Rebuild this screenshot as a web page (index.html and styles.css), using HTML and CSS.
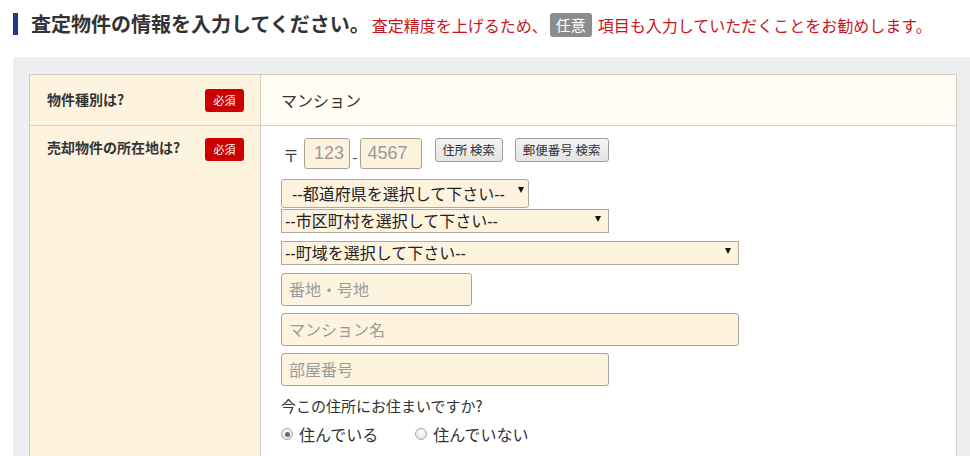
FILE: index.html
```html
<!DOCTYPE html>
<html lang="ja">
<head>
<meta charset="utf-8">
<title>査定物件の情報</title>
<link rel="stylesheet" href="styles.css">
</head>
<body>
<header class="head">
  <span class="head-bar"></span>
  <h1 class="head-title">査定物件の情報を入力してください。</h1>
  <p class="head-note">査定精度を上げるため、<span class="tag-optional">任意</span>項目も入力していただくことをお勧めします。</p>
</header>

<section class="panel">
  <div class="form-table">
    <div class="cell-label row-first">
      <span class="label-text">物件種別は?</span>
      <span class="tag-required">必須</span>
    </div>
    <div class="cell-value value-first">マンション</div>

    <div class="cell-label row-second">
      <span class="label-text">売却物件の所在地は?</span>
      <span class="tag-required">必須</span>
    </div>
    <div class="cell-value value-second">
      <div class="zip-row">
        <span class="zip-mark">〒</span>
        <input class="input zip1" type="text" placeholder="123">
        <span class="zip-dash">-</span>
        <input class="input zip2" type="text" placeholder="4567">
        <button class="btn btn-addr" type="button">住所 検索</button>
        <button class="btn btn-zip" type="button">郵便番号 検索</button>
      </div>
      <div class="select-wrap sel-pref"><select class="select"><option>--都道府県を選択して下さい--</option></select></div>
      <div class="select-wrap sel-city"><select class="select"><option>--市区町村を選択して下さい--</option></select></div>
      <div class="select-wrap sel-town"><select class="select"><option>--町域を選択して下さい--</option></select></div>
      <input class="input field addr" type="text" placeholder="番地・号地">
      <input class="input field bldg" type="text" placeholder="マンション名">
      <input class="input field room" type="text" placeholder="部屋番号">
      <p class="question">今この住所にお住まいですか?</p>
      <div class="radio-row">
        <label class="radio"><span class="radio-dot checked"></span>住んでいる</label>
        <label class="radio"><span class="radio-dot"></span>住んでいない</label>
      </div>
    </div>
  </div>
</section>
</body>
</html>
```

FILE: styles.css
```css
html, body {
  margin: 0;
  padding: 0;
  background: #ffffff;
  overflow: hidden;
}
body {
  font-family: "Liberation Sans", "Noto Sans CJK JP", sans-serif;
  color: #333333;
  width: 970px;
  height: 456px;
}
.head {
  display: flex;
  align-items: center;
  padding: 13px 0 0 13px;
  height: 22px;
}
.head-bar {
  width: 5px;
  height: 22px;
  background: #1b3a8a;
  margin-right: 13px;
  flex: none;
}
.head-title {
  margin: 0;
  font-size: 20px;
  font-weight: 600;
  line-height: 22px;
  color: #333333;
  white-space: nowrap;
  font-family: "Noto Sans CJK JP", sans-serif;
}
.head-note {
  margin: 2px 0 0 2px;
  font-size: 16px;
  line-height: 22px;
  color: #c7161e;
  white-space: nowrap;
  font-family: "Noto Sans CJK JP", sans-serif;
  display: flex;
  align-items: center;
}
.tag-optional {
  display: inline-block;
  background: #8c8c8c;
  color: #ffffff;
  border-radius: 3px;
  height: 24px;
  line-height: 24px;
  padding: 0 6px;
  margin: 0 6px 0 2px;
  font-size: 15px;
}
.panel {
  margin: 22px 0 0 13px;
  padding: 17px 13px 0 16px;
  background: #edeef0;
  height: 400px;
}
.form-table {
  display: grid;
  grid-template-columns: 231px 1fr;
  border: 1px solid #d4ccc2;
  border-bottom: none;
  width: 926px;
  height: 390px;
  grid-template-rows: 51px 1fr;
}
.cell-label {
  background: #fef3df;
  border-right: 1px solid #d4ccc2;
  display: flex;
  justify-content: space-between;
  padding: 0 16px 0 17px;
  font-family: "Noto Sans CJK JP", sans-serif;
}
.row-first {
  align-items: center;
  border-bottom: 1px solid #d2d2d2;
}
.row-second {
  align-items: flex-start;
  padding-top: 12px;
}
.label-text {
  font-size: 14px;
  font-weight: 700;
  color: #333333;
  line-height: 23px;
  margin-top: -2px;
}
.tag-required {
  background: #cc0000;
  color: #ffffff;
  font-size: 11px;
  width: 39px;
  height: 23px;
  line-height: 23px;
  text-align: center;
  border-radius: 3px;
}
.cell-value {
  padding-left: 20px;
  font-family: "Noto Sans CJK JP", sans-serif;
}
.value-first {
  background: #fffdf4;
  border-bottom: 1px solid #d2d2d2;
  display: flex;
  align-items: center;
  font-size: 16px;
  color: #333333;
}
.value-second {
  background: #ffffff;
  padding-top: 12px;
  display: flex;
  flex-direction: column;
  align-items: flex-start;
}
.zip-row {
  display: flex;
  align-items: flex-start;
  height: 31px;
}
.zip-mark {
  font-size: 16px;
  margin: 5px 5px 0 2px;
  color: #444;
  line-height: 24px;
}
.input {
  box-sizing: border-box;
  background: #fef3df;
  border: 1px solid #aaa294;
  border-radius: 3px;
  font-family: "Liberation Sans", "Noto Sans CJK JP", sans-serif;
  color: #333;
  outline: none;
  margin: 0;
}
.input::placeholder {
  color: #9a9a9a;
}
.zip1, .zip2 {
  height: 31px;
  font-size: 18px;
  padding: 0 0 0 9px;
  text-align: left;
}
.zip1 { width: 46px; }
.zip2 { width: 62px; padding-left: 7px; }
.zip-dash {
  font-size: 16px;
  margin: 6px 2px 0 2px;
  color: #555;
}
.btn {
  box-sizing: border-box;
  height: 24px;
  background: linear-gradient(#f4f4f4, #e4e4e4);
  border: 1px solid #9e9e9e;
  border-radius: 3px;
  font-size: 12.5px;
  font-family: "Noto Sans CJK JP", sans-serif;
  color: #333;
  padding: 0 4px;
  margin: 0;
  line-height: 20px;
}
.btn-addr { margin-left: 13px; width: 68px; }
.btn-zip { margin-left: 12px; width: 94px; }
.select-wrap {
  position: relative;
  box-sizing: border-box;
}
.select-wrap::after {
  content: "";
  position: absolute;
  top: 50%;
  margin-top: -4px;
  border-left: 3.5px solid transparent;
  border-right: 3.5px solid transparent;
  border-top: 6px solid #111;
  pointer-events: none;
}
.select {
  appearance: none;
  -webkit-appearance: none;
  width: 100%;
  height: 100%;
  box-sizing: border-box;
  background: #fef3df;
  border: 1px solid #b0a898;
  font-family: "Liberation Sans", "Noto Sans CJK JP", sans-serif;
  font-size: 16px;
  color: #222;
  margin: 0;
  outline: none;
}
.sel-pref {
  width: 248px;
  height: 29px;
  margin-top: 10px;
}
.sel-pref .select {
  border-radius: 3px;
  padding: 2px 0 0 10px;
}
.sel-pref::after { right: 5px; margin-top: -7px; }
.sel-city {
  width: 328px;
  height: 24px;
  margin-top: 0;
}
.sel-city .select,
.sel-town .select {
  border-radius: 0;
  padding: 1px 0 0 3px;
}
.sel-city::after,
.sel-town::after { right: 8px; }
.sel-town {
  width: 458px;
  height: 24px;
  margin-top: 8px;
}
.field {
  height: 33px;
  font-size: 16px;
  padding: 0 7px 2px;
  font-family: "Noto Sans CJK JP", sans-serif;
}
.addr { width: 191px; margin-top: 9px; }
.bldg { width: 458px; margin-top: 7px; }
.room { width: 328px; margin-top: 7px; }
.question {
  margin: 10px 0 0 0;
  font-size: 15px;
  line-height: 20px;
  color: #333;
}
.radio-row {
  display: flex;
  align-items: center;
  margin-top: 8px;
  font-size: 16px;
  color: #333;
}
.radio {
  display: flex;
  align-items: center;
  margin-right: 37px;
  line-height: 20px;
}
.radio-dot {
  box-sizing: border-box;
  width: 12px;
  height: 12px;
  border-radius: 50%;
  border: 1px solid #a6a6a6;
  background: radial-gradient(circle at 50% 35%, #ffffff, #dcdcdc);
  margin-right: 6px;
  position: relative;
}
.radio-dot.checked::after {
  content: "";
  position: absolute;
  left: 2.5px;
  top: 2.5px;
  width: 5px;
  height: 5px;
  border-radius: 50%;
  background: #6a6a6a;
}
```
